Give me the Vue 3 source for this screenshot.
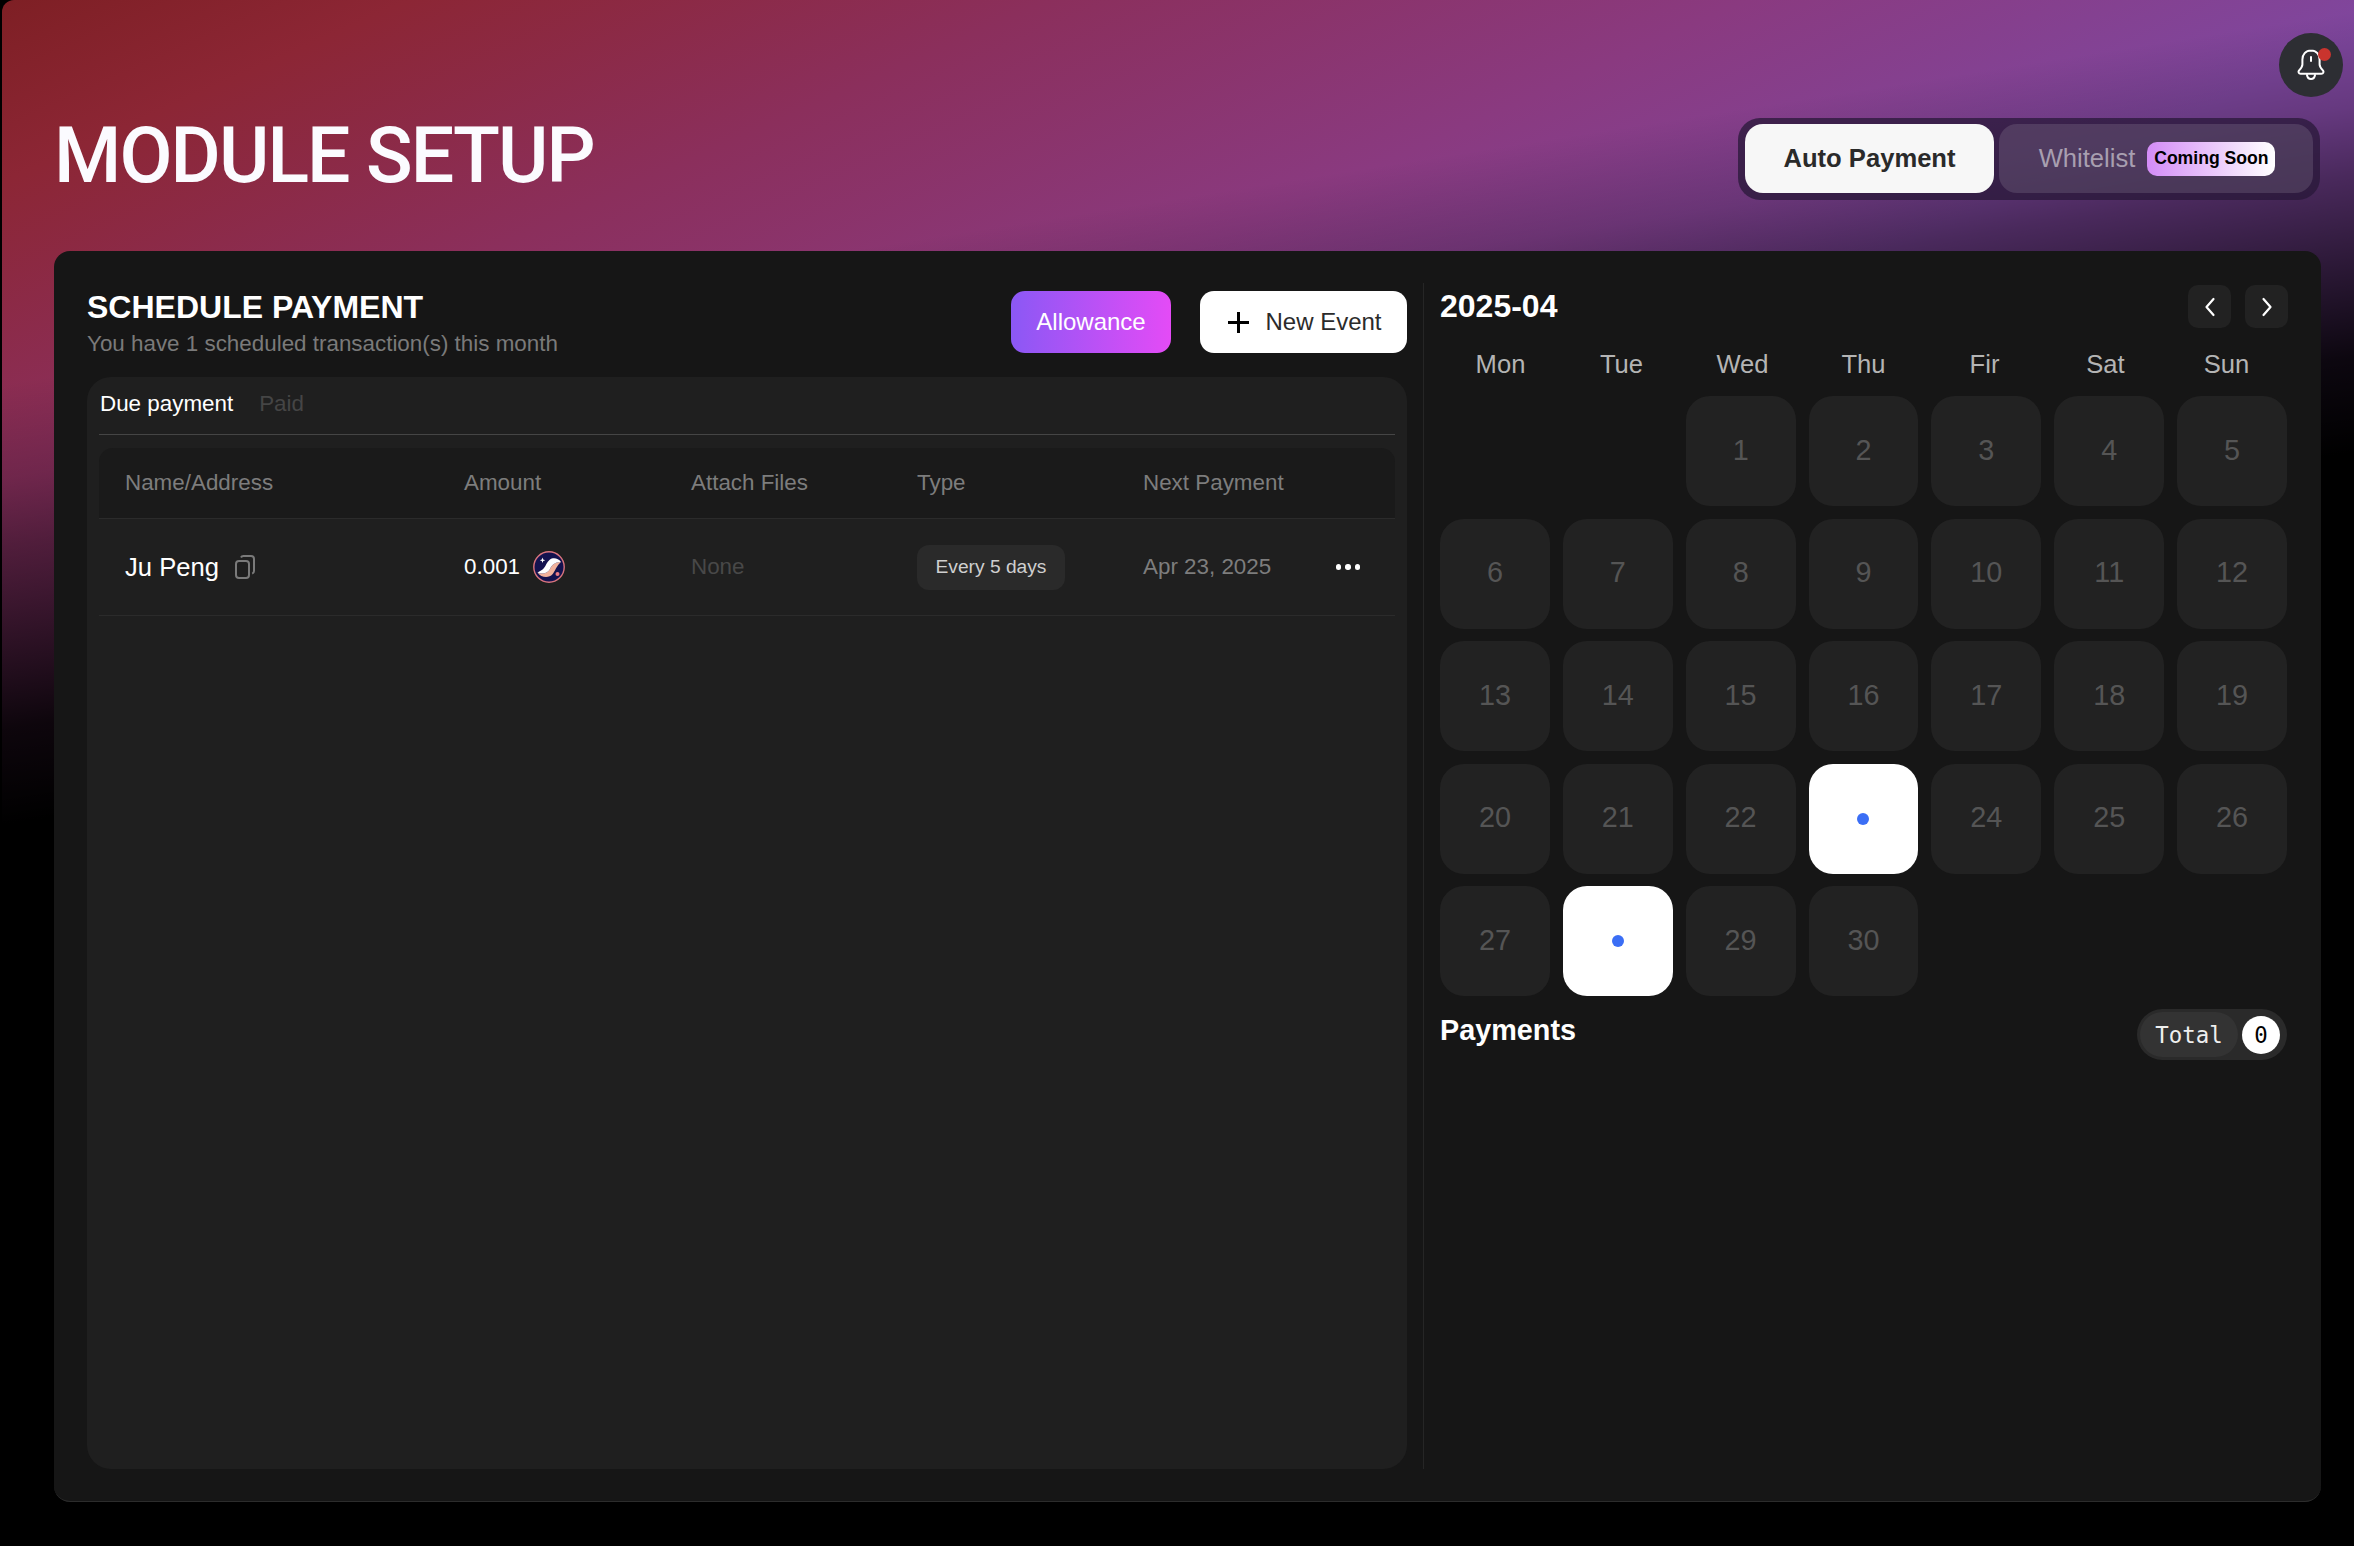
<template>
  <div class="page">
    <button class="bell" aria-label="Notifications">
      <svg width="32" height="34" viewBox="0 0 32 34" fill="none" stroke="#fff" stroke-width="2" stroke-linecap="round" stroke-linejoin="round">
        <path d="M16 2.500c-5.400 0-8.600 4-8.600 9v5c0 2.500-1.500 4-3.400 6-1 1.200-.4 3.200 1.600 3.200h20.800c2 0 2.600-2 1.600-3.200-1.900-2-3.400-3.500-3.400-6v-5c0-5-3.200-9-8.600-9z" />
        <path d="M16 9v4" />
        <path d="M12 27c.4 2.600 2 4 4 4s3.600-1.400 4-4" />
      </svg>
      <span class="bell-dot"></span>
    </button>

    <header class="top">
      <h1 class="title">MODULE SETUP</h1>
      <div class="switch">
        <div class="switch-item active">Auto Payment</div>
        <div class="switch-item muted">
          <span>Whitelist</span>
          <span class="soon">Coming Soon</span>
        </div>
      </div>
    </header>

    <main class="panel">
      <section class="left">
        <div class="left-head">
          <div>
            <h2 class="heading">SCHEDULE PAYMENT</h2>
            <p class="sub">You have 1 scheduled transaction(s) this month</p>
          </div>
          <div class="actions">
            <button class="btn-allow">Allowance</button>
            <button class="btn-new">
              <svg width="21" height="21" viewBox="0 0 21 21" stroke="#000" stroke-width="3">
                <path d="M10.500 0v21M0 10.500h21" />
              </svg>
              <span>New Event</span>
            </button>
          </div>
        </div>

        <div class="card">
          <div class="tabs">
            <span class="tab on">Due payment</span>
            <span class="tab">Paid</span>
          </div>
          <div class="thead">
            <div v-for="h in columns" :key="h" class="th">{{ h }}</div>
          </div>
          <div class="row">
            <div class="name">
              <span>Ju Peng</span>
              <svg width="20" height="24" viewBox="0 0 20 24" fill="none" stroke="#7a7a7a" stroke-width="2">
                <rect x="1" y="6" width="13" height="17" rx="3" />
                <path d="M6 2.500c.4-.9 1.200-1.500 2.400-1.500h7.600c1.700 0 3 1.300 3 3v12c0 1.300-.7 2.200-1.800 2.600" />
              </svg>
            </div>
            <div class="amount">
              <span>0.001</span>
              <svg width="32" height="32" viewBox="0 0 32 32">
                <circle cx="16" cy="16" r="15.200" fill="#14124f" stroke="#d9747e" stroke-width="1.400" />
                <path d="M4.500 21.500c3.600 5.500 11.500 6 15 1.800 2.700-3.200 4-8.600 8.500-12.300-5.300-.4-9.200 2.600-11 7-1.600 3.900-7.500 6-12.500 3.500z" fill="#f1b29c" />
                <path d="M4.500 21.500c5 2.500 10.900.4 12.500-3.500 1.800-4.400 5.700-7.400 11-7-2.800-4-8-4.800-11.300-2.300-3.100 2.400-3.500 5.800-5.700 8.300-1.800 2-4 3.300-6.500 4.500z" fill="#fff" />
                <path d="M9.500 6.500l.7 2 2 .7-2 .7-.7 2-.7-2-2-.7 2-.7z" fill="#fff" />
                <circle cx="24.500" cy="23" r="2" fill="#ec7b85" />
              </svg>
            </div>
            <div class="none">None</div>
            <div><span class="pill">Every 5 days</span></div>
            <div class="date">
              <span>Apr 23, 2025</span>
              <span class="dots"><i></i><i></i><i></i></span>
            </div>
          </div>
        </div>
      </section>

      <section class="right">
        <div class="cal-head">
          <h2 class="month">2025-04</h2>
          <div class="nav">
            <button class="nav-btn" aria-label="Previous">
              <svg width="12" height="20" viewBox="0 0 12 20" fill="none" stroke="#fff" stroke-width="2.200" stroke-linecap="round" stroke-linejoin="round">
                <path d="M9.500 2L2.500 10l7 8" />
              </svg>
            </button>
            <button class="nav-btn" aria-label="Next">
              <svg width="12" height="20" viewBox="0 0 12 20" fill="none" stroke="#fff" stroke-width="2.200" stroke-linecap="round" stroke-linejoin="round">
                <path d="M2.500 2l7 8-7 8" />
              </svg>
            </button>
          </div>
        </div>

        <div class="weekdays">
          <span v-for="d in weekdays" :key="d">{{ d }}</span>
        </div>

        <div class="days">
          <div v-for="n in 2" :key="'e' + n" class="blank"></div>
          <div v-for="d in 30" :key="d" class="day" :class="{ marked: marked.includes(d) }">
            <span v-if="marked.includes(d)" class="dot"></span>
            <template v-else>{{ d }}</template>
          </div>
        </div>

        <div class="pay-head">
          <h3 class="pay-title">Payments</h3>
          <div class="total">
            <span class="total-label">Total</span>
            <span class="total-count">0</span>
          </div>
        </div>
      </section>
    </main>
  </div>
</template>

<script setup>
const columns = ['Name/Address', 'Amount', 'Attach Files', 'Type', 'Next Payment']
const weekdays = ['Mon', 'Tue', 'Wed', 'Thu', 'Fir', 'Sat', 'Sun']
const marked = [23, 28]
</script>

<style>
html,
body {
  margin: 0;
  background: #000;
}
</style>

<style scoped>
.page {
  position: relative;
  box-sizing: border-box;
  height: 1546px;
  margin-left: 2px;
  padding: 0 33px 44px 52px;
  display: flex;
  flex-direction: column;
  border-radius: 12px 0 0 0;
  overflow: hidden;
  font-family: "Liberation Sans", Arial, sans-serif;
  background:
    linear-gradient(171deg, rgba(0, 0, 0, 0) 20%, rgba(0, 0, 0, 0.2) 25%, rgba(0, 0, 0, 0.42) 28.500%, rgba(0, 0, 0, 0.65) 33%, rgba(0, 0, 0, 0.9) 38%, #000 43%),
    linear-gradient(156deg, #7e1f24 0%, #8c2635 7%, #8b2f5c 18%, #8a3a80 30%, #7f479f 42%);
}

button {
  font-family: inherit;
  border: none;
  cursor: pointer;
}

h1,
h2,
h3,
p {
  margin: 0;
}

.bell {
  position: absolute;
  top: 33px;
  right: 11px;
  width: 64px;
  height: 64px;
  border-radius: 50%;
  background: #2d2e33;
  display: flex;
  align-items: center;
  justify-content: center;
  padding: 0;
}

.bell-dot {
  position: absolute;
  top: 15px;
  left: 39px;
  width: 13px;
  height: 13px;
  border-radius: 50%;
  background: #c9342e;
}

.top {
  height: 251px;
  flex: none;
  display: flex;
  justify-content: space-between;
  align-items: flex-start;
}

.title {
  margin-top: 112px;
  font-family: Roboto, sans-serif;
  font-size: 77px;
  line-height: 88px;
  font-weight: 500;
  letter-spacing: -1.900px;
  color: #fbfbff;
}

.switch {
  margin-top: 118px;
  margin-right: 1px;
  height: 82px;
  box-sizing: border-box;
  padding: 6px 7px 7px;
  display: flex;
  gap: 5px;
  border-radius: 22px;
  background: rgba(40, 24, 56, 0.75);
}

.switch-item {
  display: flex;
  align-items: center;
  justify-content: center;
  font-size: 25.600px;
  border-radius: 18px;
}

.switch-item.active {
  width: 249px;
  background: #f7f7f7;
  color: #2a2a2a;
  font-weight: 700;
}

.switch-item.muted {
  width: 314px;
  box-sizing: border-box;
  padding-left: 2px;
  gap: 12px;
  background: rgba(255, 255, 255, 0.12);
  color: #a89fb0;
}

.soon {
  width: 128px;
  height: 34px;
  display: flex;
  align-items: center;
  justify-content: center;
  border-radius: 10px;
  font-size: 17.600px;
  font-weight: 700;
  color: #000;
  background: linear-gradient(90deg, #d38cf6, #fff);
}

.panel {
  flex: 1;
  min-height: 0;
  box-sizing: border-box;
  padding: 32px 34px 32px 33px;
  display: flex;
  background: #161616;
  border-radius: 16px;
  border-bottom: 1px solid #2c2c2c;
}

.left {
  width: 1320px;
  flex: none;
  display: flex;
  flex-direction: column;
}

.left-head {
  height: 94px;
  flex: none;
  display: flex;
  justify-content: space-between;
}

.heading {
  margin-top: 5px;
  font-size: 32px;
  line-height: 38px;
  font-weight: 700;
  color: #fff;
}

.sub {
  margin-top: 5px;
  font-size: 22.400px;
  line-height: 26px;
  color: #7a7a7a;
}

.actions {
  margin-top: 8px;
  display: flex;
  gap: 29px;
  height: 62px;
}

.btn-allow {
  width: 160px;
  border-radius: 14px;
  font-size: 24px;
  color: #fff;
  background: linear-gradient(90deg, #8b58f5, #e44bf6);
}

.btn-new {
  width: 207px;
  box-sizing: border-box;
  padding: 0 0 0 3px;
  border-radius: 14px;
  background: #fff;
  color: #2b2b2b;
  font-size: 24px;
  display: flex;
  align-items: center;
  justify-content: center;
  gap: 16px;
}

.card {
  flex: 1;
  box-sizing: border-box;
  padding: 0 12px;
  background: #1f1f1f;
  border-radius: 24px;
}

.tabs {
  height: 58px;
  box-sizing: border-box;
  padding: 0 1px 3px;
  display: flex;
  align-items: center;
  gap: 26px;
  border-bottom: 1px solid #454545;
}

.tab {
  font-size: 22.400px;
  color: #454545;
}

.tab.on {
  color: #fff;
}

.thead,
.row {
  display: grid;
  grid-template-columns: 339px 227px 226px 226px 1fr;
  padding-left: 26px;
  align-items: center;
}

.thead {
  margin-top: 13px;
  height: 71px;
  box-sizing: border-box;
  background: #1a1a1a;
  border-radius: 14px 14px 0 0;
  border-bottom: 1px solid #2b2b2b;
}

.th {
  font-size: 22.400px;
  color: #7d7d7d;
}

.row {
  height: 97px;
  box-sizing: border-box;
  border-bottom: 1px solid #2b2b2b;
  font-size: 22.400px;
}

.name {
  display: flex;
  align-items: center;
  gap: 16px;
  font-size: 25.600px;
  color: #fff;
}

.amount {
  display: flex;
  align-items: center;
  gap: 13px;
  color: #fff;
}

.none {
  color: #484848;
}

.pill {
  display: inline-flex;
  align-items: center;
  justify-content: center;
  width: 148px;
  height: 45px;
  border-radius: 12px;
  background: #2a2a2a;
  color: #cfcfcf;
  font-size: 19.200px;
}

.date {
  display: flex;
  align-items: center;
  justify-content: space-between;
  padding-right: 35px;
  color: #7d7d7d;
}

.dots {
  display: flex;
  gap: 4px;
}

.dots i {
  width: 5.500px;
  height: 5.500px;
  border-radius: 50%;
  background: #fff;
}

.right {
  flex: 1;
  margin-left: 16px;
  padding-left: 16px;
  border-left: 1px solid #262626;
}

.cal-head {
  height: 43px;
  margin-top: 2px;
  display: flex;
  justify-content: space-between;
  align-items: center;
}

.month {
  font-size: 32px;
  font-weight: 700;
  color: #fff;
}

.nav {
  display: flex;
  gap: 14px;
  margin-right: -1px;
}

.nav-btn {
  width: 43px;
  height: 43px;
  padding: 0;
  border-radius: 10px;
  background: #222;
  display: flex;
  align-items: center;
  justify-content: center;
}

.weekdays {
  margin-top: 18px;
  height: 36px;
  display: grid;
  grid-template-columns: repeat(7, 1fr);
  align-items: center;
  text-align: center;
  font-size: 25.600px;
  color: #b4b4b4;
}

.days {
  margin-top: 14px;
  display: grid;
  grid-template-columns: repeat(7, 1fr);
  grid-auto-rows: 110px;
  gap: 12.600px 13px;
}

.day {
  display: flex;
  align-items: center;
  justify-content: center;
  box-sizing: border-box;
  padding-bottom: 2px;
  border-radius: 24px;
  background: #222;
  color: #555;
  font-size: 28.800px;
}

.day.marked {
  background: #fff;
  padding-bottom: 0;
}

.dot {
  width: 12px;
  height: 12px;
  border-radius: 50%;
  background: #3b6ef5;
}

.pay-head {
  margin-top: 13px;
  display: flex;
  justify-content: space-between;
  align-items: flex-start;
}

.pay-title {
  margin-top: 3px;
  font-size: 28.800px;
  line-height: 36px;
  font-weight: 700;
  color: #fff;
}

.total {
  height: 51px;
  width: 150px;
  box-sizing: border-box;
  padding: 3px;
  display: flex;
  align-items: center;
  gap: 4px;
  border-radius: 26px;
  background: #2a2a2a;
  font-family: "DejaVu Sans Mono", monospace;
  font-size: 22.400px;
}

.total-label {
  width: 98px;
  height: 45px;
  display: flex;
  align-items: center;
  justify-content: center;
  border-radius: 23px;
  background: #333;
  color: #eee;
}

.total-count {
  width: 38px;
  height: 38px;
  display: flex;
  align-items: center;
  justify-content: center;
  border-radius: 50%;
  background: #fff;
  color: #000;
}
</style>
